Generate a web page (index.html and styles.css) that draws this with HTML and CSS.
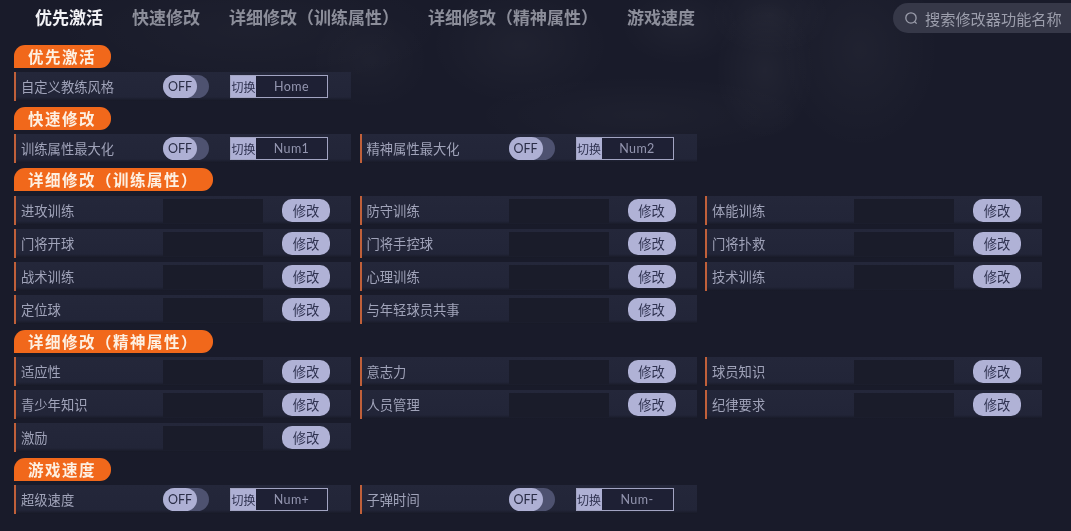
FILE: index.html
```html
<!DOCTYPE html>
<html lang="zh-CN">
<head>
<meta charset="utf-8">
<title>修改器</title>
<link rel="stylesheet" href="styles.css">
</head>
<body>
<header class="topbar">
  <nav class="tabs">
    <span class="tab active">优先激活</span>
    <span class="tab">快速修改</span>
    <span class="tab">详细修改（训练属性）</span>
    <span class="tab">详细修改（精神属性）</span>
    <span class="tab">游戏速度</span>
  </nav>
  <div class="search">
    <svg class="search-icon" viewBox="0 0 14 14" aria-hidden="true"><circle cx="6.5" cy="6.5" r="4.8"/><path d="M10 10l1.8 1.8"/></svg>
    <span>搜索修改器功能名称</span>
  </div>
</header>
<main class="content">
  <section class="section">
    <h2 class="pill">优先激活</h2>
    <div class="grid">
      <div class="row"><span class="label">自定义教练风格</span><span class="toggle"><span class="knob">OFF</span></span><span class="key"><span class="key-tag">切换</span><span class="key-name">Home</span></span></div>
    </div>
  </section>
  <section class="section">
    <h2 class="pill">快速修改</h2>
    <div class="grid">
      <div class="row"><span class="label">训练属性最大化</span><span class="toggle"><span class="knob">OFF</span></span><span class="key"><span class="key-tag">切换</span><span class="key-name">Num1</span></span></div>
      <div class="row"><span class="label">精神属性最大化</span><span class="toggle"><span class="knob">OFF</span></span><span class="key"><span class="key-tag">切换</span><span class="key-name">Num2</span></span></div>
    </div>
  </section>
  <section class="section">
    <h2 class="pill">详细修改（训练属性）</h2>
    <div class="grid">
      <div class="row"><span class="label">进攻训练</span><span class="field"></span><span class="btn">修改</span></div>
      <div class="row"><span class="label">防守训练</span><span class="field"></span><span class="btn">修改</span></div>
      <div class="row"><span class="label">体能训练</span><span class="field"></span><span class="btn">修改</span></div>
      <div class="row"><span class="label">门将开球</span><span class="field"></span><span class="btn">修改</span></div>
      <div class="row"><span class="label">门将手控球</span><span class="field"></span><span class="btn">修改</span></div>
      <div class="row"><span class="label">门将扑救</span><span class="field"></span><span class="btn">修改</span></div>
      <div class="row"><span class="label">战术训练</span><span class="field"></span><span class="btn">修改</span></div>
      <div class="row"><span class="label">心理训练</span><span class="field"></span><span class="btn">修改</span></div>
      <div class="row"><span class="label">技术训练</span><span class="field"></span><span class="btn">修改</span></div>
      <div class="row"><span class="label">定位球</span><span class="field"></span><span class="btn">修改</span></div>
      <div class="row"><span class="label">与年轻球员共事</span><span class="field"></span><span class="btn">修改</span></div>
    </div>
  </section>
  <section class="section">
    <h2 class="pill">详细修改（精神属性）</h2>
    <div class="grid">
      <div class="row"><span class="label">适应性</span><span class="field"></span><span class="btn">修改</span></div>
      <div class="row"><span class="label">意志力</span><span class="field"></span><span class="btn">修改</span></div>
      <div class="row"><span class="label">球员知识</span><span class="field"></span><span class="btn">修改</span></div>
      <div class="row"><span class="label">青少年知识</span><span class="field"></span><span class="btn">修改</span></div>
      <div class="row"><span class="label">人员管理</span><span class="field"></span><span class="btn">修改</span></div>
      <div class="row"><span class="label">纪律要求</span><span class="field"></span><span class="btn">修改</span></div>
      <div class="row"><span class="label">激励</span><span class="field"></span><span class="btn">修改</span></div>
    </div>
  </section>
  <section class="section">
    <h2 class="pill">游戏速度</h2>
    <div class="grid">
      <div class="row"><span class="label">超级速度</span><span class="toggle"><span class="knob">OFF</span></span><span class="key"><span class="key-tag">切换</span><span class="key-name">Num+</span></span></div>
      <div class="row"><span class="label">子弹时间</span><span class="toggle"><span class="knob">OFF</span></span><span class="key"><span class="key-tag">切换</span><span class="key-name">Num-</span></span></div>
    </div>
  </section>
</main>
</body>
</html>
```
FILE: styles.css
```css
* { box-sizing: border-box; }
html, body { height: 100%; }
body {
  margin: 0;
  overflow: hidden;
  color: #a9abc2;
  font-family: "Noto Sans CJK SC", "Noto Sans", sans-serif;
  background-color: #191b2a;
  background-image:
    radial-gradient(ellipse 50px 70px at 765px 70px, rgba(255,255,255,.04), transparent),
    radial-gradient(ellipse 60px 40px at 770px 15px, rgba(255,255,255,.035), transparent),
    radial-gradient(ellipse 90px 60px at 520px 45px, rgba(255,255,255,.03), transparent),
    radial-gradient(ellipse 80px 100px at 860px 50px, rgba(255,255,255,.03), transparent),
    radial-gradient(ellipse 60px 50px at 370px 60px, rgba(255,255,255,.025), transparent),
    radial-gradient(ellipse 200px 60px at 250px 30px, rgba(255,255,255,.022), transparent),
    radial-gradient(ellipse 170px 40px at 640px 115px, rgba(255,255,255,.022), transparent),
    radial-gradient(ellipse 60px 40px at 680px 25px, rgba(255,255,255,.03), transparent);
}
.topbar {
  display: flex;
  justify-content: space-between;
  height: 45px;
  padding: 3px 0 0 35px;
  filter: blur(.3px);
}
.tabs {
  display: flex;
  gap: 29px;
  height: 27px;
  align-items: center;
  font-size: 17px;
  font-weight: 700;
}
.tab { color: #8c8e9a; white-space: nowrap; }
.tab.active { color: #f2f2f6; }
.search {
  display: flex;
  align-items: center;
  gap: 6px;
  width: 178px;
  height: 30px;
  padding-left: 11px;
  border-radius: 15px 0 0 15px;
  background: #363848;
  color: #9c9eac;
  font-size: 15.2px;
  white-space: nowrap;
}
.search-icon {
  flex: none;
  width: 15px;
  height: 15px;
  fill: none;
  stroke: #9c9eac;
  stroke-width: 1.2;
}
.content {
  padding-left: 14px;
  filter: blur(.3px);
}
.section { margin-bottom: 2px; }
.section:nth-child(2) { margin-bottom: 1px; }
.section:nth-child(3) .pill { margin-bottom: 5px; }
.pill {
  display: inline-flex;
  align-items: center;
  height: 23px;
  margin: 0 0 4px;
  padding: 0 15px 0 14px;
  border-radius: 11px 11px 11px 0;
  background: #f1681b;
  color: #fdf0e2;
  font-size: 15.5px;
  font-weight: 700;
  letter-spacing: 1.5px;
  line-height: 1;
  vertical-align: top;
}
.grid {
  display: grid;
  grid-template-columns: repeat(3, 337px);
  column-gap: 8.5px;
  row-gap: 4px;
  padding-bottom: 4px;
}
.row {
  display: flex;
  align-items: center;
  height: 29px;
  padding-left: 5px;
  border-left: 2px solid #c0603a;
  background: linear-gradient(180deg, #24273a 0%, #222538 86%, #171926 100%);
}
.label {
  flex: none;
  width: 142px;
  font-size: 13.3px;
  color: #a0a3b9;
  white-space: nowrap;
}
.toggle {
  flex: none;
  display: flex;
  width: 46px;
  height: 23px;
  margin-right: 21px;
  border-radius: 12px;
  background: #4e5270;
}
.knob {
  display: flex;
  align-items: center;
  justify-content: center;
  width: 34px;
  height: 23px;
  border-radius: 12px;
  background: #aeb0d4;
  color: #2b2e47;
  font: 12.5px Lato, "Liberation Sans", sans-serif;
}
.key {
  flex: none;
  display: flex;
  width: 98px;
  height: 23px;
  border: 1px solid #a2a4c2;
  font-size: 12px;
}
.key-tag {
  flex: none;
  display: flex;
  align-items: center;
  justify-content: center;
  width: 25px;
  background: #aeb0d4;
  color: #2f3250;
}
.key-name {
  flex: 1;
  display: flex;
  align-items: center;
  justify-content: center;
  color: #9496b0;
  font: 12.5px Lato, "Liberation Sans", sans-serif;
  letter-spacing: .4px;
  background: #1e2034;
}
.field {
  flex: none;
  width: 100px;
  height: 24px;
  margin-right: 19px;
  background: #1a1c2a;
}
.btn {
  flex: none;
  display: flex;
  align-items: center;
  justify-content: center;
  width: 48px;
  height: 23px;
  border-radius: 10px;
  background: #b0b2d6;
  color: #2f3250;
  font-size: 13.3px;
}
```
